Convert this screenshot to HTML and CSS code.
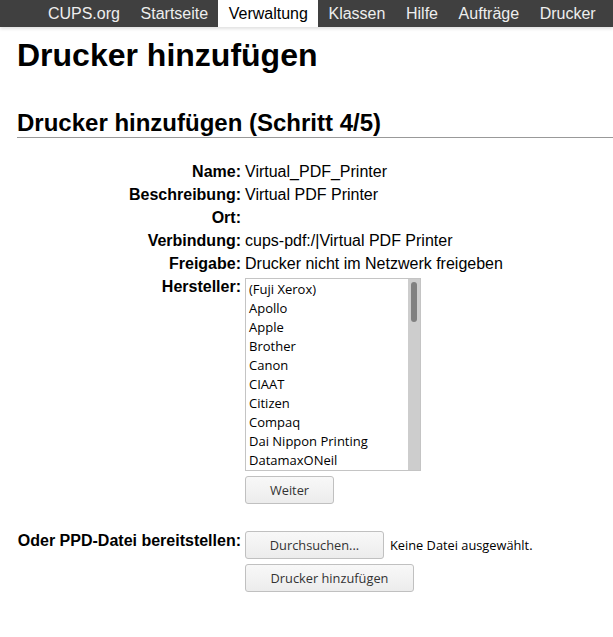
FILE: index.html
```html
<!DOCTYPE html>
<html lang="de">
<head>
    <meta charset="UTF-8">
    <meta name="viewport" content="width=device-width, initial-scale=1.0">
    <title>Drucker hinzufügen - CUPS</title>
    <link rel="stylesheet" href="styles.css">
</head>
<body>
    <div class="header">
        <ul class="nav">
            <li><a href="#">CUPS.org</a></li>
            <li><a href="#">Startseite</a></li>
            <li class="active"><a href="#">Verwaltung</a></li>
            <li><a href="#">Klassen</a></li>
            <li><a href="#">Hilfe</a></li>
            <li><a href="#">Aufträge</a></li>
            <li><a href="#">Drucker</a></li>
        </ul>
    </div>
    <div class="body">
        <h1>Drucker hinzufügen</h1>
        <h2 class="title">Drucker hinzufügen (Schritt 4/5)</h2>
        <table class="form">
            <tr><th class="label">Name:</th><td>Virtual_PDF_Printer</td></tr>
            <tr><th class="label">Beschreibung:</th><td>Virtual PDF Printer</td></tr>
            <tr><th class="label">Ort:</th><td></td></tr>
            <tr><th class="label">Verbindung:</th><td>cups-pdf:/|Virtual PDF Printer</td></tr>
            <tr><th class="label">Freigabe:</th><td>Drucker nicht im Netzwerk freigeben</td></tr>
            <tr>
                <th class="label">Hersteller:</th>
                <td>
                    <div class="listbox">
                        <ul class="options">
                            <li>(Fuji Xerox)</li>
                            <li>Apollo</li>
                            <li>Apple</li>
                            <li>Brother</li>
                            <li>Canon</li>
                            <li>CIAAT</li>
                            <li>Citizen</li>
                            <li>Compaq</li>
                            <li>Dai Nippon Printing</li>
                            <li>DatamaxONeil</li>
                        </ul>
                        <div class="scrollbar"><div class="thumb"></div></div>
                    </div>
                    <button class="btn btn-next">Weiter</button>
                </td>
            </tr>
            <tr class="spacer"><td colspan="2"></td></tr>
            <tr>
                <th class="label">Oder PPD-Datei bereitstellen:</th>
                <td>
                    <div class="file-row">
                        <button class="btn btn-browse">Durchsuchen...</button>
                        <span class="file-name">Keine Datei ausgewählt.</span>
                    </div>
                    <button class="btn btn-add">Drucker hinzufügen</button>
                </td>
            </tr>
        </table>
    </div>
</body>
</html>
```

FILE: styles.css
```css
body {
    margin: 0;
    font-family: "Liberation Sans", Arial, sans-serif;
    font-size: 16px;
    color: #000;
    background: #fff;
}
.header {
    background-color: #404040;
    box-shadow: 0 2px 3px rgba(0, 0, 0, 0.12);
}
.nav {
    list-style: none;
    margin: 0;
    padding: 0 7px 0 0;
    display: flex;
    justify-content: flex-end;
    height: 27px;
}
.nav li a {
    display: block;
    padding: 0 10.3px;
    line-height: 27px;
    font-size: 16px;
    color: #eee;
    text-decoration: none;
}
.nav li.active a {
    background-color: #fff;
    color: #000;
}
.body {
    padding: 0 0 0 17px;
}
h1 {
    font-size: 32px;
    font-weight: bold;
    margin: 10px 0 0 0;
    line-height: 37px;
}
h2.title {
    font-size: 24px;
    font-weight: bold;
    margin: 35px 0 0 0;
    line-height: 27px;
    padding-bottom: 1px;
    border-bottom: 1px solid #999;
}
table.form {
    border-collapse: collapse;
    margin-top: 22px;
}
table.form th.label {
    text-align: right;
    vertical-align: top;
    font-weight: bold;
    padding: 0 4px 0 0;
    line-height: 23px;
    white-space: nowrap;
    width: 224px;
}
table.form td {
    padding: 0;
    line-height: 23px;
    vertical-align: top;
}
.listbox {
    display: flex;
    width: 174px;
    height: 191px;
    border: 1px solid #c4c4c4;
    margin-top: 3px;
    font-family: "Open Sans", sans-serif;
    font-size: 13px;
    color: #000;
}
.options {
    list-style: none;
    margin: 0;
    padding: 1px 0 0 3px;
    flex: 1;
    overflow: hidden;
}
.options li {
    line-height: 19px;
    white-space: nowrap;
}
.scrollbar {
    width: 12px;
    background-color: #cdcdcd;
    padding-top: 3px;
    display: flex;
    justify-content: center;
}
.thumb {
    width: 6px;
    height: 40px;
    border-radius: 3px;
    background-color: #808080;
}
.btn {
    display: block;
    font-family: "Open Sans", sans-serif;
    font-size: 12.8px;
    color: #333;
    background: linear-gradient(#f8f8f8, #ececec);
    border: 1px solid #c0c0c0;
    border-radius: 3px;
    height: 28px;
    padding: 0;
    cursor: pointer;
}
.btn-next {
    width: 89px;
    margin: 5px 0 0 0;
}
tr.spacer td {
    height: 25px;
}
.file-row {
    display: flex;
    align-items: center;
    gap: 6px;
    margin-top: 2px;
}
.btn-browse {
    width: 139px;
}
.file-name {
    font-family: "Open Sans", sans-serif;
    font-size: 12.8px;
    color: #000;
}
.btn-add {
    width: 169px;
    margin-top: 5px;
}
```
